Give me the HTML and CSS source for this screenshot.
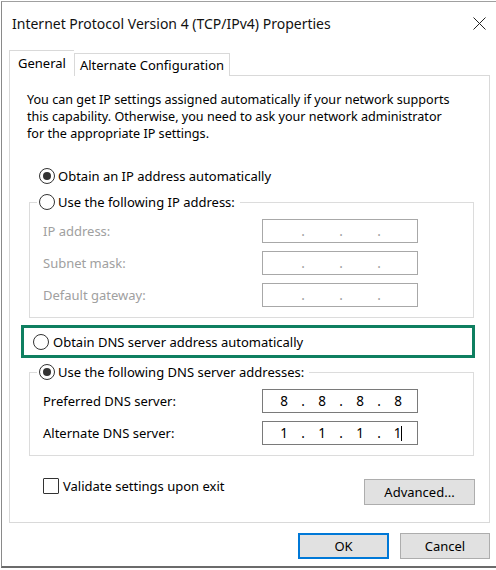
FILE: index.html
```html
<!DOCTYPE html>
<html lang="en">
<head>
    <meta charset="UTF-8">
    <meta name="viewport" content="width=device-width, initial-scale=1.0">
    <title>Internet Protocol Version 4 (TCP/IPv4) Properties</title>
    <link rel="stylesheet" href="styles.css">
</head>
<body>
    <div class="window">
        <!-- Title bar -->
        <div class="titlebar">
            <span class="title">Internet Protocol Version 4 (TCP/IPv4) Properties</span>
            <svg class="close" width="13" height="13" viewBox="0 0 13 13">
                <path d="M0.5 0.5 L12.5 12.5 M12.5 0.5 L0.5 12.5" stroke="#222" stroke-width="1" fill="none"/>
            </svg>
        </div>

        <div class="content">
            <div class="tabs">
                <div class="tab active">General</div>
                <div class="tab">Alternate Configuration</div>
            </div>

            <div class="panel">
                <p class="intro">You can get IP settings assigned automatically if your network supports<br>
                    this capability. Otherwise, you need to ask your network administrator<br>
                    for the appropriate IP settings.</p>

                <label class="option first">
                    <span class="radio checked"></span>Obtain an IP address automatically
                </label>

                <!-- Static IP group (disabled) -->
                <fieldset class="group">
                    <legend><label class="option"><span class="radio"></span>Use the following IP address:</label></legend>
                    <div class="rows">
                        <span class="field-label disabled">IP address:</span>
                        <div class="ip disabled"><span></span><i>.</i><span></span><i>.</i><span></span><i>.</i><span></span></div>
                        <span class="field-label disabled">Subnet mask:</span>
                        <div class="ip disabled"><span></span><i>.</i><span></span><i>.</i><span></span><i>.</i><span></span></div>
                        <span class="field-label disabled">Default gateway:</span>
                        <div class="ip disabled"><span></span><i>.</i><span></span><i>.</i><span></span><i>.</i><span></span></div>
                    </div>
                </fieldset>

                <div class="highlight">
                    <label class="option"><span class="radio"></span>Obtain DNS server address automatically</label>
                </div>

                <!-- DNS group -->
                <fieldset class="group dns">
                    <legend><label class="option"><span class="radio checked"></span>Use the following DNS server addresses:</label></legend>
                    <div class="rows">
                        <span class="field-label">Preferred DNS server:</span>
                        <div class="ip"><span>8</span><i>.</i><span>8</span><i>.</i><span>8</span><i>.</i><span>8</span></div>
                        <span class="field-label">Alternate DNS server:</span>
                        <div class="ip"><span>1</span><i>.</i><span>1</span><i>.</i><span>1</span><i>.</i><span>1<b class="caret"></b></span></div>
                    </div>
                </fieldset>

                <div class="panel-footer">
                    <label class="check-option"><span class="checkbox"></span>Validate settings upon exit</label>
                    <button class="btn advanced">Advanced...</button>
                </div>
            </div>

            <div class="actions">
                <button class="btn default">OK</button>
                <button class="btn">Cancel</button>
            </div>
        </div>
    </div>
</body>
</html>
```

FILE: styles.css
```css
* {
    box-sizing: border-box;
}
body {
    margin: 0;
    background: #fff;
    font-family: "Segoe UI", "Noto Sans", sans-serif;
    font-size: 13px;
    color: #000;
}
.window {
    margin: 1px 0 0 1px;
    height: 567px;
    border-top: 1px solid #a0a0a0;
    border-left: 1px solid #8a8a8a;
    border-bottom: 2px solid #6b6b6b;
    background: #fff;
}
.titlebar {
    height: 43px;
    display: flex;
    align-items: center;
    justify-content: space-between;
    padding: 0 10px 1px 10px;
}
.title {
    color: #111;
    font-size: 14px;
}
.close {
    margin-top: 1px;
}
.content {
    padding: 5px 6px 0 7px;
}

/* Tabs */
.tabs {
    display: flex;
    align-items: flex-end;
    height: 26px;
}
.tab {
    height: 23px;
    padding: 0 5px;
    border: 1px solid #d9d9d9;
    border-bottom: none;
    background: #fff;
    display: flex;
    align-items: center;
    line-height: 16px;
}
.tab.active {
    position: relative;
    height: 26px;
    padding: 0 8px 2px 8px;
    border-right: none;
}
.panel {
    margin-top: -1px;
    height: 448px;
    border: 1px solid #d9d9d9;
    background: #fff;
}
.intro {
    margin: 0;
    padding: 15px 17px 0 17px;
    font-size: 12.6px;
    line-height: 17px;
    white-space: nowrap;
}

/* Radio / checkbox controls */
.option {
    display: flex;
    align-items: center;
    gap: 3px;
    height: 16px;
    line-height: 16px;
}
.option.first {
    margin: 26px 0 0 29px;
}
.radio {
    width: 16px;
    height: 16px;
    border: 1px solid #333;
    border-radius: 50%;
    display: flex;
    align-items: center;
    justify-content: center;
    flex: none;
}
.radio.checked::after {
    content: "";
    width: 8px;
    height: 8px;
    border-radius: 50%;
    background: #333;
}
.check-option {
    display: flex;
    align-items: center;
    gap: 4px;
    line-height: 16px;
}
.checkbox {
    width: 16px;
    height: 16px;
    border: 1px solid #333;
    border-radius: 1px;
}

/* Group boxes */
.group {
    margin: 10px 15px 0 19px;
    padding: 9px 13px 10px 7px;
    border: 1px solid #dcdcdc;
    min-inline-size: 0;
}
.group legend {
    padding: 0 5px 0 2px;
}
.group.dns {
    margin-top: 6px;
}
.rows {
    margin-left: 6px;
    display: grid;
    grid-template-columns: 219px 156px;
    grid-auto-rows: 24px;
    row-gap: 8px;
    align-items: center;
}
.field-label.disabled {
    color: #a0a0a0;
}
.ip {
    height: 24px;
    width: 156px;
    border: 1px solid #7a7a7a;
    display: flex;
    align-items: center;
    padding-left: 6px;
    font-size: 13.5px;
}
.ip span {
    width: 30px;
    text-align: center;
}
.ip i {
    width: 8px;
    text-align: center;
    font-style: normal;
}
.ip.disabled {
    border-color: #a8a8a8;
    color: #a0a0a0;
}
.caret {
    display: inline-block;
    width: 1px;
    height: 15px;
    background: #000;
    vertical-align: -3px;
}

/* Highlighted DNS option */
.highlight {
    margin: 7px 0 0 11px;
    width: 454px;
    height: 33px;
    border: 3px solid #0f7f60;
    display: flex;
    align-items: center;
    padding-left: 9px;
}
.highlight .option {
    gap: 4px;
}

.panel-footer {
    margin-top: 22px;
    padding: 0 14px 0 33px;
    display: flex;
    justify-content: space-between;
    align-items: flex-start;
}

/* Buttons */
.btn {
    font-family: inherit;
    font-size: 13px;
    color: #000;
    height: 26px;
    background: #e1e1e1;
    border: 1px solid #adadad;
    padding: 0;
}
.advanced {
    width: 111px;
    margin-top: 1px;
}
.actions {
    margin-top: 10px;
    display: flex;
    justify-content: flex-end;
    gap: 11px;
}
.actions .btn {
    width: 90px;
}
.btn.default {
    width: 91px;
    border: 2px solid #0078d7;
}
```
